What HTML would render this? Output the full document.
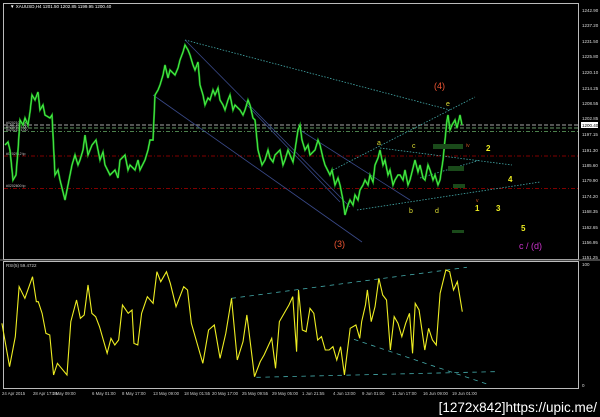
<!DOCTYPE html><html><head><style>
body{margin:0;background:#000;width:600px;height:417px;overflow:hidden;font-family:"Liberation Sans",sans-serif}
svg{display:block}
</style></head><body>
<svg width="600" height="417" xmlns="http://www.w3.org/2000/svg" font-family="Liberation Sans, sans-serif">
<rect width="600" height="417" fill="#000"/>
<rect x="3.5" y="3.5" width="575" height="256" fill="none" stroke="#bbb" stroke-width="1"/>
<rect x="3.5" y="261.5" width="575" height="127" fill="none" stroke="#bbb" stroke-width="1"/>
<line x1="0" y1="260" x2="600" y2="260" stroke="#888"/>
<text x="10" y="8" fill="#fff" font-size="4.5">▼ XAUUSD,H4  1201.50  1202.85  1199.95  1200.40</text>
<g fill="#ddd" font-size="4.5">
<text x="582" y="12">1242.90</text><text x="582" y="27">1237.20</text><text x="582" y="43">1231.50</text><text x="582" y="58">1225.80</text><text x="582" y="74">1220.10</text><text x="582" y="90">1214.25</text><text x="582" y="105">1208.55</text><text x="582" y="120">1202.85</text><text x="582" y="136">1197.15</text><text x="582" y="152">1191.30</text><text x="582" y="167">1185.60</text><text x="582" y="182">1179.90</text><text x="582" y="198">1174.20</text><text x="582" y="213">1168.35</text><text x="582" y="229">1162.65</text><text x="582" y="244">1156.95</text><text x="582" y="259">1151.25</text>
<text x="582" y="266">100</text><text x="582" y="387">0</text>
</g>
<rect x="581" y="122" width="17" height="6" fill="#fff"/><text x="582" y="127" font-size="4.5" fill="#000">1200.40</text>
<line x1="4" y1="125" x2="578" y2="125" stroke="#ddd" stroke-dasharray="4,2" stroke-width="0.7"/>
<line x1="4" y1="128" x2="578" y2="128" stroke="#8c8" stroke-dasharray="4,2" stroke-width="0.7"/>
<line x1="4" y1="131.5" x2="578" y2="131.5" stroke="#6a6" stroke-dasharray="4,2,1,2" stroke-width="0.7"/>
<line x1="4" y1="156" x2="578" y2="156" stroke="#a00" stroke-dasharray="4,2,1,2" stroke-width="0.8"/>
<line x1="4" y1="188.5" x2="578" y2="188.5" stroke="#a00" stroke-dasharray="4,2,1,2" stroke-width="0.8"/>
<g fill="#ccc" font-size="3.5"><text x="6" y="124">#020210 1.00</text><text x="6" y="128">#020210 1.00</text><text x="6" y="131">#020210 1.00</text><text x="6" y="155">#0202912 tp</text><text x="6" y="187">#0202600 tp</text></g>
<g stroke="#3a4a8a" stroke-width="0.8" fill="none">
<line x1="185" y1="40" x2="350" y2="207"/>
<line x1="153" y1="95" x2="362" y2="242"/>
<line x1="247" y1="105" x2="340" y2="202"/>
<line x1="300" y1="130" x2="410" y2="200"/>
</g>
<g stroke="#4aa" stroke-width="0.8" fill="none" stroke-dasharray="1.5,1.5">
<line x1="185" y1="40" x2="450" y2="110"/>
<line x1="333" y1="170" x2="475" y2="97"/>
<line x1="380" y1="148" x2="512" y2="165"/>
<line x1="357" y1="210" x2="540" y2="182"/>
<line x1="420" y1="178" x2="480" y2="160"/>
</g>
<g fill="none" stroke-linejoin="miter">
<polyline stroke="#1a9a1a" stroke-width="2" points="5,145 8,142 10,150 13,180 16,175 18,150 20,120 23,125 25,118 28,125 30,112 32,95 35,100 38,92 40,110 43,105 45,115 50,118 52,115 55,175 58,170 60,180 63,192 65,200 68,185 72,165 75,155 78,165 80,160 83,150 85,135 88,155 92,145 96,140 100,160 103,152 105,165 110,175 115,170 118,178 120,160 125,155 128,170 130,165 135,170 138,160 140,170 145,160 148,150 150,140 153,140 155,95 158,90 160,85 163,75 165,65 168,78 170,70 175,75 178,68 180,60 183,52 185,45 188,50 190,55 193,65 195,70 198,62 200,85 203,95 205,105 208,98 210,100 213,90 215,95 218,88 220,100 223,105 225,110 228,100 230,95 233,110 235,105 240,110 243,115 245,110 248,100 250,105 253,118 255,120 258,150 262,165 265,160 268,150 270,158 273,162 275,155 280,150 283,165 285,160 288,150 290,155 293,162 295,150 298,130 300,125 302,140 305,150 308,145 310,155 315,150 318,140 320,145 323,158 325,165 330,175 332,170 335,185 338,178 340,185 343,200 345,215 348,205 350,200 353,205 355,195 358,200 360,190 363,185 365,180 368,185 370,175 373,182 375,165 378,158 380,150 383,165 385,160 388,175 390,170 393,185 395,180 398,175 400,175 403,180 405,170 408,185 410,180 413,168 415,160 418,172 420,165 423,178 425,180 428,165 430,170 433,180 435,175 438,185 440,180 443,160 445,140 447,120 448,115 450,130 452,125 455,120 457,128 460,115 462,125"/>
<polyline stroke="#5f5" stroke-width="0.7" points="5,145 8,142 10,150 13,180 16,175 18,150 20,120 23,125 25,118 28,125 30,112 32,95 35,100 38,92 40,110 43,105 45,115 50,118 52,115 55,175 58,170 60,180 63,192 65,200 68,185 72,165 75,155 78,165 80,160 83,150 85,135 88,155 92,145 96,140 100,160 103,152 105,165 110,175 115,170 118,178 120,160 125,155 128,170 130,165 135,170 138,160 140,170 145,160 148,150 150,140 153,140 155,95 158,90 160,85 163,75 165,65 168,78 170,70 175,75 178,68 180,60 183,52 185,45 188,50 190,55 193,65 195,70 198,62 200,85 203,95 205,105 208,98 210,100 213,90 215,95 218,88 220,100 223,105 225,110 228,100 230,95 233,110 235,105 240,110 243,115 245,110 248,100 250,105 253,118 255,120 258,150 262,165 265,160 268,150 270,158 273,162 275,155 280,150 283,165 285,160 288,150 290,155 293,162 295,150 298,130 300,125 302,140 305,150 308,145 310,155 315,150 318,140 320,145 323,158 325,165 330,175 332,170 335,185 338,178 340,185 343,200 345,215 348,205 350,200 353,205 355,195 358,200 360,190 363,185 365,180 368,185 370,175 373,182 375,165 378,158 380,150 383,165 385,160 388,175 390,170 393,185 395,180 398,175 400,175 403,180 405,170 408,185 410,180 413,168 415,160 418,172 420,165 423,178 425,180 428,165 430,170 433,180 435,175 438,185 440,180 443,160 445,140 447,120 448,115 450,130 452,125 455,120 457,128 460,115 462,125"/>
</g>
<g fill="#1a4a1a"><rect x="433" y="144" width="30" height="5"/><rect x="448" y="166" width="16" height="5"/><rect x="453" y="184" width="12" height="4"/><rect x="452" y="230" width="12" height="3"/></g>
<g font-size="9">
<text x="434" y="89" fill="#e53">(4)</text>
<text x="334" y="247" fill="#e53">(3)</text>
<text x="519" y="249" fill="#c3c">c / (d)</text>
</g>
<g font-size="7" fill="#dd3">
<text x="446" y="106">e</text><text x="377" y="145">a</text><text x="412" y="148">c</text>
<text x="409" y="213">b</text><text x="435" y="213">d</text>
</g>
<g font-size="8" fill="#ee2" font-weight="bold">
<text x="486" y="151">2</text><text x="508" y="182">4</text><text x="475" y="211">1</text><text x="496" y="211">3</text><text x="521" y="231">5</text>
</g>
<text x="466" y="147" font-size="5" fill="#c52">iv</text>
<text x="476" y="202" font-size="5" fill="#c52">v</text>
<text x="6" y="267" fill="#ccc" font-size="4.5">RSI(5) 59.4722</text>
<g transform="translate(0,250) scale(0.3827,0.3333)">
<g stroke="#4aa" fill="none" stroke-dasharray="4.5,4.5">
<line x1="605" y1="145" x2="1220" y2="52" stroke-width="0.8" vector-effect="non-scaling-stroke"/>
<line x1="670" y1="382" x2="1295" y2="365" stroke-width="0.8" vector-effect="non-scaling-stroke"/>
<line x1="925" y1="268" x2="1280" y2="405" stroke-width="0.8" vector-effect="non-scaling-stroke"/>
</g>
<polyline fill="none" stroke="#ee2" stroke-width="1.1" vector-effect="non-scaling-stroke" points="5,220 25,350 40,260 50,110 65,145 85,80 95,155 100,155 110,190 120,250 130,255 140,375 150,340 175,375 185,215 200,150 210,205 220,195 230,105 240,190 250,200 260,230 270,270 280,310 290,265 300,285 310,270 320,165 335,190 345,180 350,280 360,285 370,190 385,140 400,160 410,65 420,95 435,65 445,100 460,170 480,110 490,120 500,220 510,260 520,300 530,340 545,240 560,225 575,325 590,250 605,145 620,330 635,275 645,195 650,240 665,380 680,335 690,315 700,290 710,265 720,355 730,215 745,185 755,165 765,140 775,305 780,120 790,240 800,245 810,175 820,190 830,270 840,260 850,300 860,300 870,290 880,330 890,290 900,375 915,235 930,225 940,265 945,215 955,165 960,120 970,215 980,170 990,85 1000,135 1010,150 1020,300 1030,200 1040,220 1050,260 1060,220 1070,190 1078,310 1085,160 1095,180 1110,300 1120,235 1130,270 1140,285 1150,130 1165,60 1175,65 1185,120 1195,95 1208,185"/>
</g>
<g fill="#ccc" font-size="4.3">
<text x="2" y="395">24 Apr 2015</text><text x="33" y="395">28 Apr 17:00</text><text x="52" y="395">1 May 09:00</text><text x="92" y="395">6 May 01:00</text><text x="122" y="395">8 May 17:00</text><text x="153" y="395">13 May 09:00</text><text x="184" y="395">18 May 01:55</text><text x="212" y="395">20 May 17:00</text><text x="242" y="395">25 May 09:55</text><text x="272" y="395">29 May 05:00</text><text x="302" y="395">1 Jun 21:55</text><text x="333" y="395">4 Jun 13:00</text><text x="362" y="395">9 Jun 01:00</text><text x="392" y="395">11 Jun 17:00</text><text x="423" y="395">16 Jun 09:00</text><text x="452" y="395">19 Jun 01:00</text>
</g>
<text x="597" y="412" text-anchor="end" fill="#fff" font-size="13.5">[1272x842]https://upic.me/</text>
</svg>
</body></html>
